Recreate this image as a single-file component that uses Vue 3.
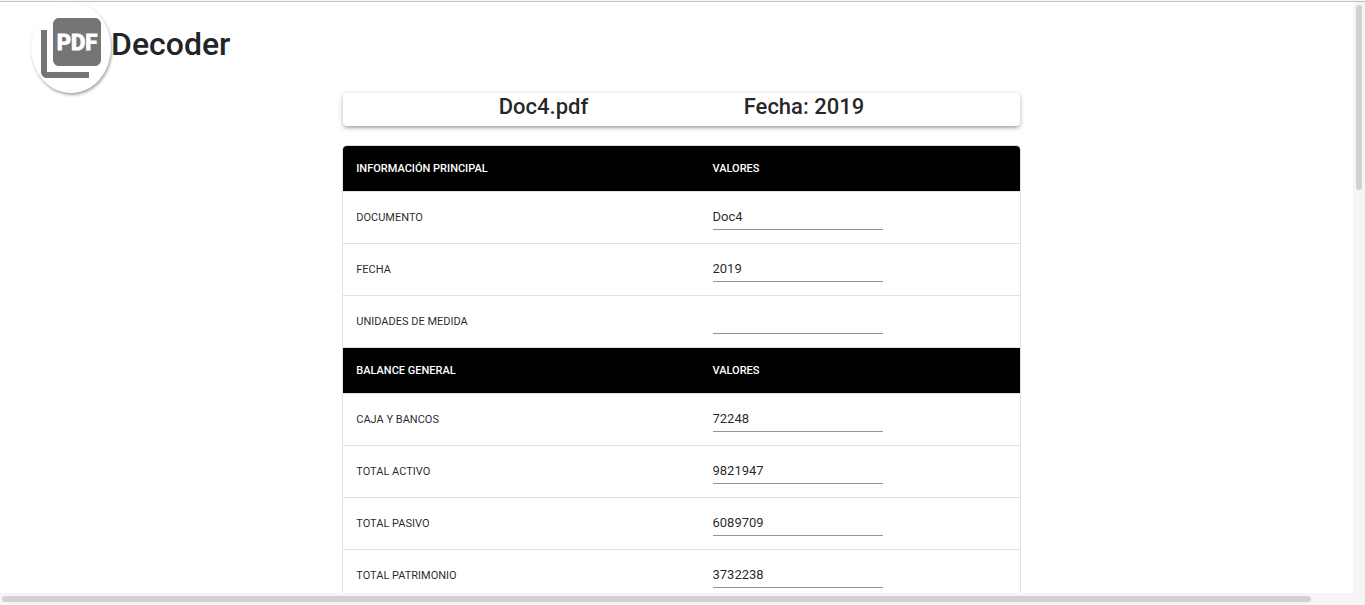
<script setup>
import { reactive } from 'vue'

const sections = reactive([
  {
    title: 'Información principal',
    rows: [
      { id: 'documento', label: 'Documento', value: 'Doc4' },
      { id: 'fecha', label: 'Fecha', value: '2019' },
      { id: 'unidades', label: 'Unidades de medida', value: '' }
    ]
  },
  {
    title: 'Balance general',
    rows: [
      { id: 'caja', label: 'Caja y bancos', value: '72248' },
      { id: 'activo', label: 'Total activo', value: '9821947' },
      { id: 'pasivo', label: 'Total pasivo', value: '6089709' },
      { id: 'patrimonio', label: 'Total patrimonio', value: '3732238' }
    ]
  }
])
</script>

<template>
  <div class="window">
    <div class="body">
      <div class="view">
        <header class="brand">
          <button class="logo" type="button" aria-label="PDF">
            <svg viewBox="0 0 72 72" width="72" height="72" aria-hidden="true">
              <path d="M60 6H24c-3.300 0-6 2.700-6 6v36c0 3.300 2.700 6 6 6h36c3.300 0 6-2.700 6-6V12c0-3.300-2.700-6-6-6zM12 18H6v42c0 3.300 2.700 6 6 6h42v-6H12V18z" />
              <text x="42" y="38" text-anchor="middle">PDF</text>
            </svg>
          </button>
          <h1>Decoder</h1>
        </header>

        <main class="content">
          <div class="column">
            <section class="summary">
              <h2>Doc4.pdf</h2>
              <h2>Fecha: 2019</h2>
            </section>

            <table class="data">
              <tbody v-for="section in sections" :key="section.title">
                <tr>
                  <th scope="col">{{ section.title }}</th>
                  <th scope="col" class="value">Valores</th>
                </tr>
                <tr v-for="row in section.rows" :key="row.id">
                  <td><label :for="row.id">{{ row.label }}</label></td>
                  <td class="value"><input :id="row.id" v-model="row.value" type="text" /></td>
                </tr>
              </tbody>
            </table>
          </div>
        </main>
      </div>
      <div class="track track-y"><div class="thumb"></div></div>
    </div>
    <div class="track track-x"><div class="thumb"></div></div>
  </div>
</template>

<style>
body {
  margin: 0;
  background: #fff;
  overflow: hidden;
}
</style>

<style scoped>
.window {
  box-sizing: border-box;
  height: 100vh;
  display: flex;
  flex-direction: column;
  font-family: Roboto, "Liberation Sans", sans-serif;
  color: rgba(0, 0, 0, 0.87);
}

.window::before {
  content: "";
  flex: none;
  height: 1px;
  background: #f7f7f7;
  border-bottom: 1px solid #c2c2c2;
}

.body {
  flex: 1;
  min-height: 0;
  display: flex;
}

.view {
  flex: 1;
  min-width: 0;
  overflow: hidden;
}

.brand {
  display: flex;
  align-items: flex-start;
  padding-left: 31px;
}

.logo {
  flex: none;
  display: flex;
  align-items: center;
  justify-content: center;
  width: 80px;
  height: 91px;
  padding: 0;
  border: 0;
  border-radius: 50%;
  background: #fff;
  box-shadow: 1px 2px 3px rgba(0, 0, 0, 0.35);
}

.logo svg {
  display: block;
  fill: #757575;
}

.logo text {
  fill: #fff;
  stroke: #fff;
  stroke-width: 1px;
  font: 700 22px Roboto, sans-serif;
}

h1 {
  margin: 22px 0 0;
  font-size: 32px;
  line-height: 40px;
  font-weight: 500;
  color: #212529;
}

.content {
  display: flex;
  justify-content: center;
  margin: 0 -5px 0 5px;
}

.column {
  width: 50%;
}

.summary {
  display: flex;
  justify-content: space-evenly;
  margin-bottom: 20px;
  padding-bottom: 5px;
  border-radius: 4px;
  background: #fff;
  box-shadow: 0 3px 3px -2px rgba(0, 0, 0, 0.2), 0 2px 4px 0 rgba(0, 0, 0, 0.18), 0 1px 6px 0 rgba(0, 0, 0, 0.12);
}

h2 {
  margin: 0;
  font-size: 22px;
  line-height: 28px;
  font-weight: 500;
}

.data {
  width: 100%;
  table-layout: fixed;
  border-collapse: separate;
  border-spacing: 0;
  border-radius: 4px;
  overflow: hidden;
  box-shadow: 0 0 0 1px #e0e0e0;
}

.data th,
.data td {
  box-sizing: border-box;
  padding: 0 13px;
  border-bottom: 1px solid #e0e0e0;
  text-align: left;
  vertical-align: middle;
  font-size: 11px;
  line-height: 16px;
  text-transform: uppercase;
}

.data th {
  height: 46px;
  background: #000;
  background-clip: padding-box;
  color: #fff;
  font-weight: 500;
}

.data td {
  height: 52px;
}

.data .value {
  padding-left: 31px;
}

.data td.value {
  padding-bottom: 2px;
}

.data input {
  box-sizing: border-box;
  display: block;
  width: 170px;
  max-width: 100%;
  height: 26px;
  padding: 0;
  border: 0;
  border-bottom: 1px solid #949494;
  border-radius: 0;
  background: transparent;
  outline: 0;
  font-family: inherit;
  font-size: 13px;
  color: inherit;
}

.track {
  box-sizing: border-box;
  flex: none;
  background: #f5f5f5;
}

.thumb {
  border-radius: 3px;
  background: #d1d1d1;
}

.track-y {
  width: 12px;
  padding: 3px;
}

.track-y .thumb {
  height: 185px;
}

.track-x {
  height: 12px;
  padding: 3px 54px 3px 2px;
}

.track-x .thumb {
  height: 6px;
}
</style>
